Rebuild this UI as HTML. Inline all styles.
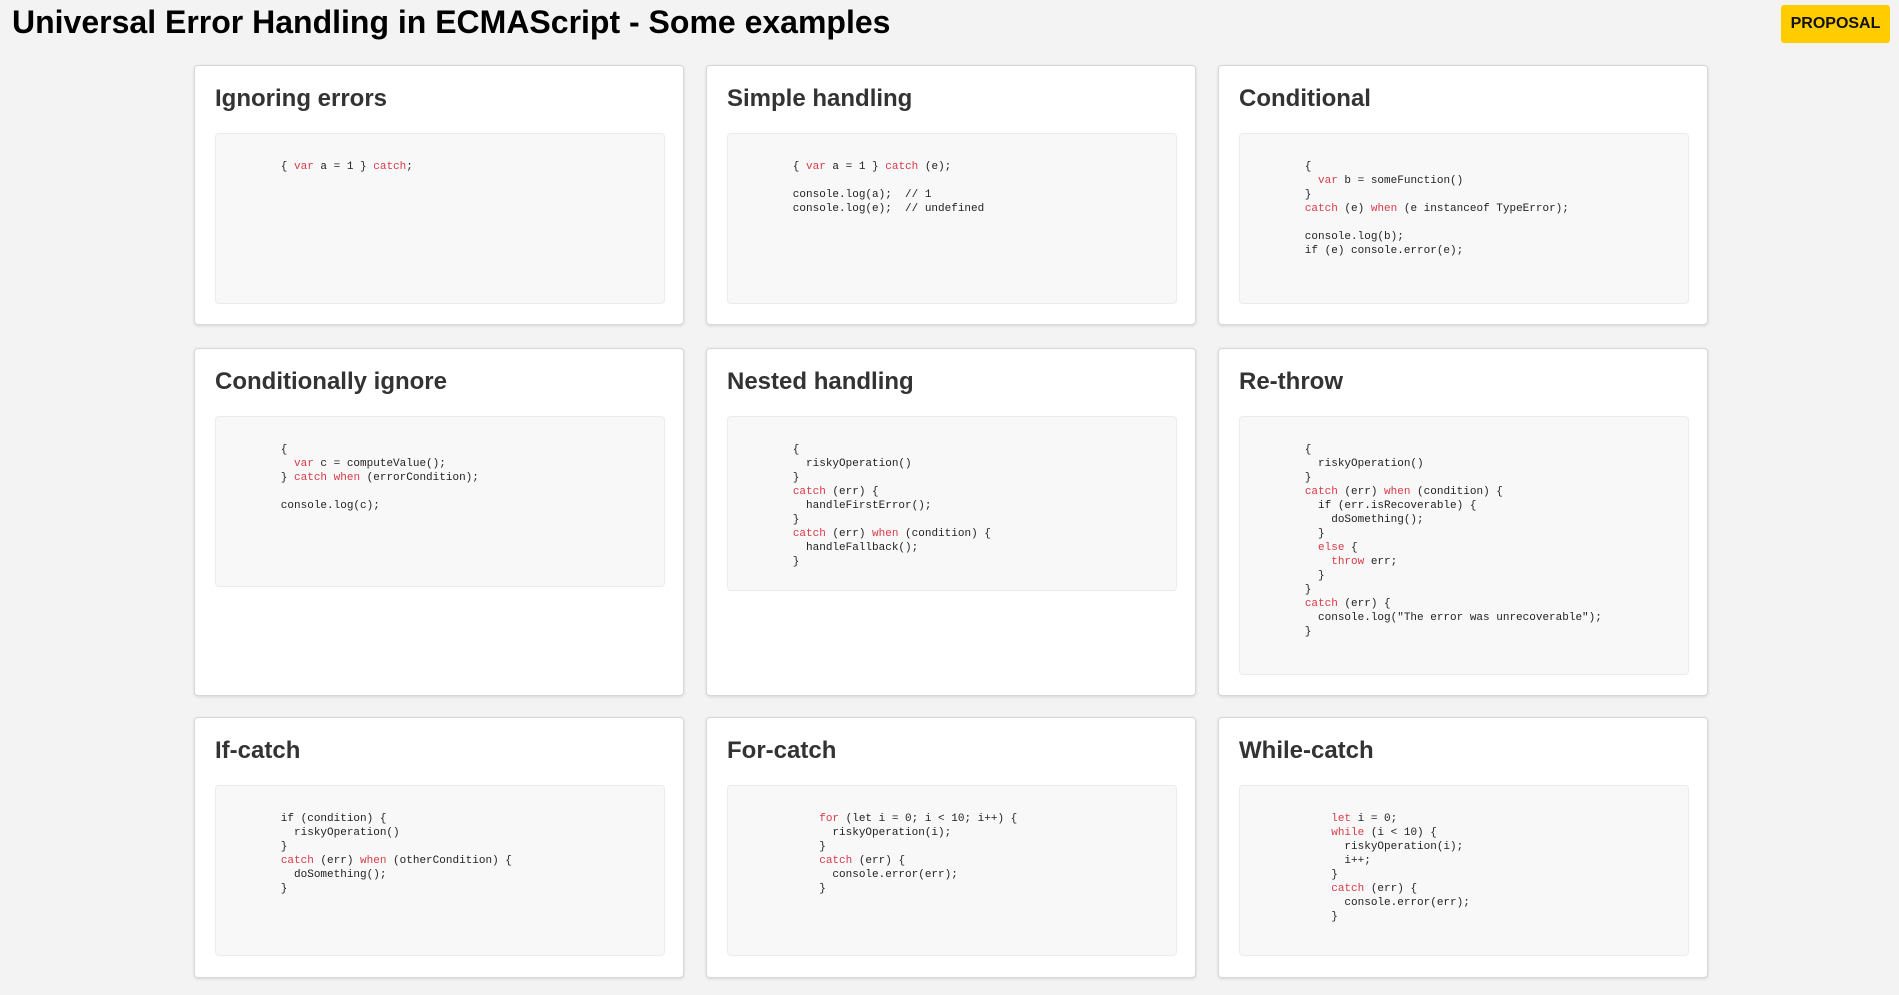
<!DOCTYPE html>
<html><head><meta charset="utf-8"><style>
body{margin:0;background:#f3f3f3;width:1899px;height:995px;overflow:hidden;font-family:"Liberation Sans",Arial,sans-serif;position:relative}
h1{position:absolute;left:12px;top:4px;margin:0;font-size:32px;font-weight:bold;color:#000;}
.btn{position:absolute;left:1781px;top:5px;width:109px;height:38px;background:#ffcc00;border-radius:3px;font-weight:bold;font-size:16px;line-height:38px;text-align:center;color:#111}
.card{position:absolute;width:490px;background:#fff;border:1px solid #d8d8d8;border-radius:4px;box-shadow:0 1px 3px rgba(0,0,0,.12);box-sizing:border-box}
.card h2{position:absolute;left:20px;top:19px;margin:0;font-size:24px;color:#333;font-weight:bold}
pre{position:absolute;left:20px;top:67px;width:450px;box-sizing:border-box;margin:0;padding:12px;background:#f8f8f8;border:1px solid #ececec;border-radius:4px;font-family:"Liberation Mono",monospace;font-size:11px;line-height:14px;color:#222;overflow:hidden}
.k{color:#d73a49}
</style></head><body>
<h1>Universal Error Handling in ECMAScript - Some examples</h1>
<div class="btn">PROPOSAL</div>

<div class="card" style="left:194px;top:65px;height:260px"><h2>Ignoring errors</h2><pre style="height:171px">

        { <span class="k">var</span> a = 1 } <span class="k">catch</span>;</pre></div>

<div class="card" style="left:706px;top:65px;height:260px"><h2>Simple handling</h2><pre style="height:171px">

        { <span class="k">var</span> a = 1 } <span class="k">catch</span> (e);

        console.log(a);  // 1
        console.log(e);  // undefined</pre></div>

<div class="card" style="left:1218px;top:65px;height:260px"><h2>Conditional</h2><pre style="height:171px">

        {
          <span class="k">var</span> b = someFunction()
        }
        <span class="k">catch</span> (e) <span class="k">when</span> (e instanceof TypeError);

        console.log(b);
        if (e) console.error(e);</pre></div>

<div class="card" style="left:194px;top:348px;height:348px"><h2>Conditionally ignore</h2><pre style="height:171px">

        {
          <span class="k">var</span> c = computeValue();
        } <span class="k">catch</span> <span class="k">when</span> (errorCondition);

        console.log(c);</pre></div>

<div class="card" style="left:706px;top:348px;height:348px"><h2>Nested handling</h2><pre style="height:175px">

        {
          riskyOperation()
        }
        <span class="k">catch</span> (err) {
          handleFirstError();
        }
        <span class="k">catch</span> (err) <span class="k">when</span> (condition) {
          handleFallback();
        }</pre></div>

<div class="card" style="left:1218px;top:348px;height:348px"><h2>Re-throw</h2><pre style="height:259px">

        {
          riskyOperation()
        }
        <span class="k">catch</span> (err) <span class="k">when</span> (condition) {
          if (err.isRecoverable) {
            doSomething();
          }
          <span class="k">else</span> {
            <span class="k">throw</span> err;
          }
        }
        <span class="k">catch</span> (err) {
          console.log("The error was unrecoverable");
        }</pre></div>

<div class="card" style="left:194px;top:717px;height:261px"><h2>If-catch</h2><pre style="height:171px">

        if (condition) {
          riskyOperation()
        }
        <span class="k">catch</span> (err) <span class="k">when</span> (otherCondition) {
          doSomething();
        }</pre></div>

<div class="card" style="left:706px;top:717px;height:261px"><h2>For-catch</h2><pre style="height:171px">

            <span class="k">for</span> (let i = 0; i &lt; 10; i++) {
              riskyOperation(i);
            }
            <span class="k">catch</span> (err) {
              console.error(err);
            }</pre></div>

<div class="card" style="left:1218px;top:717px;height:261px"><h2>While-catch</h2><pre style="height:171px">

            <span class="k">let</span> i = 0;
            <span class="k">while</span> (i &lt; 10) {
              riskyOperation(i);
              i++;
            }
            <span class="k">catch</span> (err) {
              console.error(err);
            }</pre></div>
</body></html>
